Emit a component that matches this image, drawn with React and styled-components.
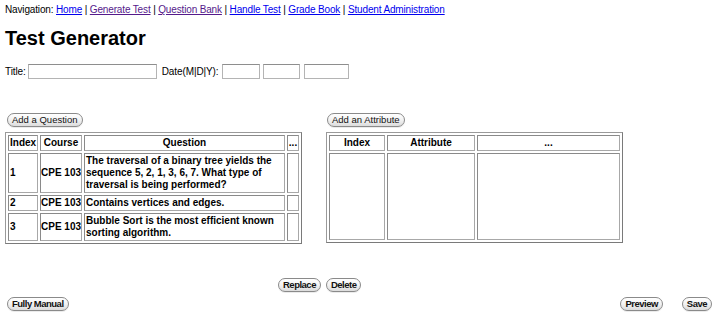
import React from "react";
import styled, { createGlobalStyle } from "styled-components";

const Global = createGlobalStyle`
  html, body { margin: 0; padding: 0; background: #fff; }
  body { font-family: "Liberation Sans", Arial, sans-serif; color: #000; }
`;

const Page = styled.div`
  width: 720px;
  height: 321px;
  box-sizing: border-box;
  padding: 3px 5px 0 5px;
  font-size: 10px;
  overflow: hidden;
`;

const Nav = styled.div`
  line-height: 13px;
  height: 13px;
  white-space: nowrap;
  letter-spacing: -0.15px;
`;

const NavLink = styled.a`
  color: ${(p) => (p.$visited ? "#551a8b" : "#0000ee")};
  text-decoration: underline;
`;

const Heading = styled.h1`
  margin: 11px 0 0 0;
  font-size: 20px;
  line-height: 23px;
  font-weight: bold;
`;

const FormRow = styled.div`
  margin-top: 13px;
  display: flex;
  align-items: center;
  height: 16px;
  white-space: nowrap;
  letter-spacing: -0.1px;
`;

const Label = styled.span`
  margin-right: ${(p) => p.$gap || 3}px;
`;

const TextBox = styled.input`
  box-sizing: border-box;
  width: ${(p) => p.$w}px;
  height: 15px;
  margin: 0 ${(p) => p.$mr || 0}px 0 0;
  padding: 0 2px;
  border: 1px solid #b4b4b4;
  border-top-color: #8e8e8e;
  background: #fff;
  font: 10px "Liberation Sans", Arial, sans-serif;
  outline: none;
`;

const Panels = styled.div`
  margin-top: 34px;
  display: flex;
  gap: 24px;
  align-items: flex-start;
`;

const Panel = styled.div`
  width: 297px;
  display: flex;
  flex-direction: column;
  align-items: flex-start;
`;

const Pill = styled.button`
  box-sizing: border-box;
  height: 14px;
  padding: 0 ${(p) => p.$pad || 4}px;
  margin: 0 0 0 ${(p) => p.$ml || 0}px;
  border: 1px solid #8a8a8a;
  border-radius: 7px;
  background: linear-gradient(#ffffff 0%, #f2f2f2 50%, #dcdcdc 100%);
  box-shadow: 0 1px 0 rgba(0, 0, 0, 0.08);
  color: #111;
  font-family: "Liberation Sans", Arial, sans-serif;
  font-weight: ${(p) => (p.$narrow ? "bold" : "normal")};
  font-size: ${(p) => (p.$narrow ? "9.5px" : "9.5px")};
  letter-spacing: ${(p) => (p.$narrow ? "-0.5px" : "0")};
  line-height: 12px;
  white-space: nowrap;
  cursor: default;
`;

const Grid = styled.table`
  margin-top: 5px;
  width: 297px;
  height: ${(p) => p.$h || "auto"};
  border-collapse: separate;
  border-spacing: 2px;
  border: 1px solid #7a7a7a;
  border-top-color: #9a9a9a;
  border-left-color: #9a9a9a;
  table-layout: fixed;
  font-size: 10px;
  font-weight: bold;
`;

const Cell = styled.td`
  box-sizing: border-box;
  padding: 1px ${(p) => (p.$tight ? 0 : 1)}px;
  line-height: 12px;
  border: 1px solid #a8a8a8;
  border-top-color: #8a8a8a;
  border-left-color: #8a8a8a;
  text-align: ${(p) => p.$align || "left"};
  vertical-align: middle;
  white-space: ${(p) => (p.$nowrap ? "nowrap" : "normal")};
  overflow: hidden;
`;

const HeadCell = styled(Cell).attrs({ as: "th" })`
  text-align: center;
  font-weight: bold;
`;

const EmptyRow = styled.tr`
  height: ${(p) => p.$h}px;
`;

const ActionRow = styled.div`
  margin-top: 34px;
  margin-left: 273px;
  display: flex;
  gap: 5px;
`;

const FooterRow = styled.div`
  margin-top: 5px;
  display: flex;
  justify-content: space-between;
  align-items: center;
  padding: 0 3px 0 2px;
`;

const FooterRight = styled.div`
  display: flex;
  gap: 19px;
`;

const navItems = [
  { t: "Home", v: false },
  { t: "Generate Test", v: true },
  { t: "Question Bank", v: true },
  { t: "Handle Test", v: false },
  { t: "Grade Book", v: false },
  { t: "Student Administration", v: false },
];

const questions = [
  {
    i: "1",
    c: "CPE 103",
    q: "The traversal of a binary tree yields the sequence 5, 2, 1, 3, 6, 7. What type of traversal is being performed?",
  },
  { i: "2", c: "CPE 103", q: "Contains vertices and edges." },
  { i: "3", c: "CPE 103", q: "Bubble Sort is the most efficient known sorting algorithm." },
];

export default function App() {
  return (
    <>
      <Global />
      <Page>
        <Nav>
          Navigation:{" "}
          {navItems.map((n, k) => (
            <React.Fragment key={n.t}>
              <NavLink href="#" $visited={n.v}>
                {n.t}
              </NavLink>
              {k < navItems.length - 1 ? " | " : ""}
            </React.Fragment>
          ))}
        </Nav>
        <Heading>Test Generator</Heading>
        <FormRow>
          <Label $gap={2}>Title:</Label>
          <TextBox $w={129} $mr={5} />
          <Label $gap={4}>Date(M|D|Y):</Label>
          <TextBox $w={38} $mr={3} />
          <TextBox $w={37} $mr={4} />
          <TextBox $w={45} />
        </FormRow>
        <Panels>
          <Panel>
            <Pill $ml={2}>Add a Question</Pill>
            <Grid>
              <colgroup>
                <col style={{ width: 30 }} />
                <col style={{ width: 42 }} />
                <col style={{ width: 201 }} />
                <col style={{ width: 12 }} />
              </colgroup>
              <thead>
                <tr>
                  <HeadCell>Index</HeadCell>
                  <HeadCell $tight>Course</HeadCell>
                  <HeadCell>Question</HeadCell>
                  <HeadCell $tight>...</HeadCell>
                </tr>
              </thead>
              <tbody>
                {questions.map((r) => (
                  <tr key={r.i}>
                    <Cell>{r.i}</Cell>
                    <Cell $nowrap $tight>
                      {r.c}
                    </Cell>
                    <Cell>{r.q}</Cell>
                    <Cell />
                  </tr>
                ))}
              </tbody>
            </Grid>
          </Panel>
          <Panel>
            <Pill $ml={1}>Add an Attribute</Pill>
            <Grid $h="110px">
              <colgroup>
                <col style={{ width: 56 }} />
                <col style={{ width: 88 }} />
                <col style={{ width: 143 }} />
              </colgroup>
              <thead>
                <tr>
                  <HeadCell>Index</HeadCell>
                  <HeadCell>Attribute</HeadCell>
                  <HeadCell>...</HeadCell>
                </tr>
              </thead>
              <tbody>
                <EmptyRow $h={87}>
                  <Cell />
                  <Cell />
                  <Cell />
                </EmptyRow>
              </tbody>
            </Grid>
          </Panel>
        </Panels>
        <ActionRow>
          <Pill $narrow>Replace</Pill>
          <Pill $narrow>Delete</Pill>
        </ActionRow>
        <FooterRow>
          <Pill $narrow>Fully Manual</Pill>
          <FooterRight>
            <Pill $narrow>Preview</Pill>
            <Pill $narrow>Save</Pill>
          </FooterRight>
        </FooterRow>
      </Page>
    </>
  );
}
